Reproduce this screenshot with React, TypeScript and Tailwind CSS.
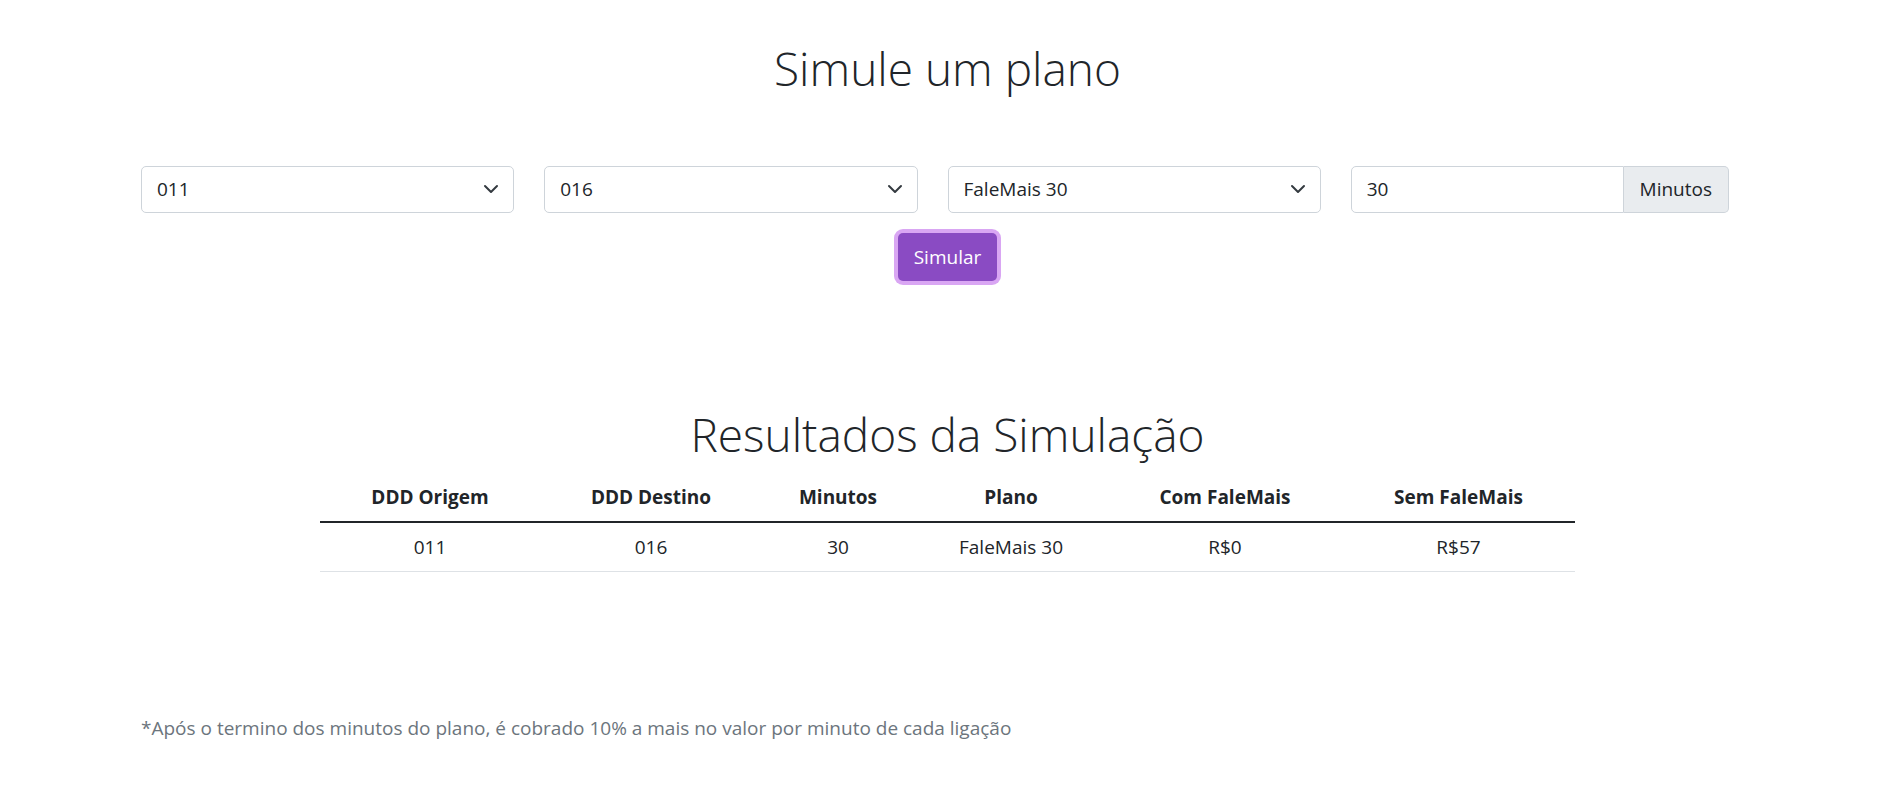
import { useState } from 'react';

const dddOptions = ['011', '016', '017', '018'];
const planos = ['FaleMais 30', 'FaleMais 60', 'FaleMais 120'];

const Chevron = () => (
  <svg
    className="pointer-events-none absolute right-[15px] top-1/2 -translate-y-1/2"
    width="16"
    height="16"
    viewBox="0 0 16 16"
    fill="none"
  >
    <path d="M2 5l6 6 6-6" stroke="#343a40" strokeWidth="2" strokeLinecap="round" strokeLinejoin="round" />
  </svg>
);

const SelectBox = ({ value, options, onChange }: { value: string; options: string[]; onChange: (v: string) => void }) => (
  <div className="relative">
    <select
      value={value}
      onChange={(e) => onChange(e.target.value)}
      className="block h-[47px] w-full appearance-none rounded-[5px] border border-[#ced4da] bg-white pl-[15px] pr-[45px] text-[19px] leading-[30px] text-[#212529] outline-none"
    >
      {options.map((o) => (
        <option key={o} value={o}>
          {o}
        </option>
      ))}
    </select>
    <Chevron />
  </div>
);

export default function App() {
  const [origem, setOrigem] = useState('011');
  const [destino, setDestino] = useState('016');
  const [plano, setPlano] = useState('FaleMais 30');
  const [minutos, setMinutos] = useState('30');

  const cols = [
    { label: 'DDD Origem', value: origem, w: 'w-[220px]' },
    { label: 'DDD Destino', value: destino, w: 'w-[222px]' },
    { label: 'Minutos', value: minutos, w: 'w-[152px]' },
    { label: 'Plano', value: plano, w: 'w-[194px]' },
    { label: 'Com FaleMais', value: 'R$0', w: 'w-[234px]' },
    { label: 'Sem FaleMais', value: 'R$57', w: 'w-[233px]' },
  ];

  return (
    <div className="min-h-screen bg-white font-['Open_Sans','Noto_Sans',sans-serif] text-[19px] leading-[30px] text-[#212529]">
      <div className="mx-auto w-[1613px]">
        <h1 className="pt-[40px] text-center text-[46px] font-light leading-[57.6px]">Simule um plano</h1>

        {/* formulário */}
        <div className="mt-[68px] grid grid-cols-4">
          <div className="pr-[30px]">
            <SelectBox value={origem} options={dddOptions} onChange={setOrigem} />
          </div>
          <div className="pr-[30px]">
            <SelectBox value={destino} options={dddOptions} onChange={setDestino} />
          </div>
          <div className="pr-[30px]">
            <SelectBox value={plano} options={planos} onChange={setPlano} />
          </div>
          <div className="pr-[25px]">
            <div className="flex h-[47px]">
              <input
                value={minutos}
                onChange={(e) => setMinutos(e.target.value)}
                className="min-w-0 flex-1 rounded-l-[5px] border border-[#ced4da] bg-white px-[15px] text-[19px] text-[#212529] outline-none"
              />
              <span className="flex items-center rounded-r-[5px] border border-l-0 border-[#ced4da] bg-[#e9ecef] px-[16px] text-[#212529]">
                Minutos
              </span>
            </div>
          </div>
        </div>

        <div className="mt-[20px] flex justify-center">
          <button className="h-[48px] rounded-[5px] bg-[#8a4bc3] px-[16px] text-[19px] text-white ring-4 ring-[#d9a6f3]">
            Simular
          </button>
        </div>

        <h2 className="mt-[125px] text-center text-[46px] font-light leading-[57.6px]">Resultados da Simulação</h2>

        <table className="mx-auto mt-[10px] w-[1255px] table-fixed border-collapse text-center">
          <thead>
            <tr className="border-b-2 border-[#212529]">
              {cols.map((c) => (
                <th key={c.label} className={`${c.w} py-[9px] font-bold`}>
                  {c.label}
                </th>
              ))}
            </tr>
          </thead>
          <tbody>
            <tr className="border-b border-[#dee2e6]">
              {cols.map((c) => (
                <td key={c.label} className="py-[9px]">
                  {c.value}
                </td>
              ))}
            </tr>
          </tbody>
        </table>

        <p className="mt-[141px] text-[#6c757d]">
          *Após o termino dos minutos do plano, é cobrado 10% a mais no valor por minuto de cada ligação
        </p>
      </div>
    </div>
  );
}
